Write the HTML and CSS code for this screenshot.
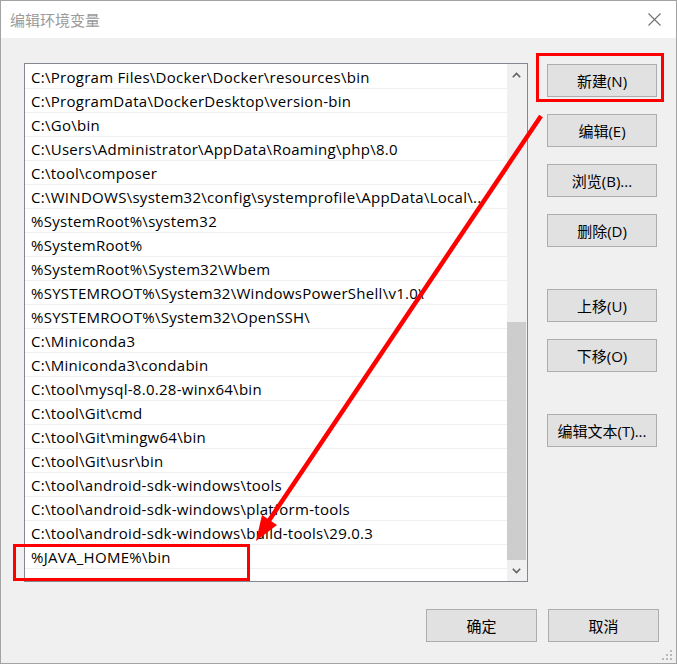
FILE: index.html
```html
<!DOCTYPE html>
<html lang="zh-CN">
<head>
<meta charset="utf-8">
<title>编辑环境变量</title>
<link rel="stylesheet" href="styles.css">
</head>
<body>
<div class="dialog">
  <div class="titlebar">
    <span class="title">编辑环境变量</span>
    <svg class="close" width="13" height="13" viewBox="0 0 13 13"><path d="M0.5 0.5 L12.5 12.5 M12.5 0.5 L0.5 12.5" stroke="#707070" stroke-width="1.1" fill="none"/></svg>
  </div>
  <div class="body">
    <div class="main">
      <div class="listbox">
        <ul class="rows">
          <li class="row">C:\Program Files\Docker\Docker\resources\bin</li>
          <li class="row">C:\ProgramData\DockerDesktop\version-bin</li>
          <li class="row">C:\Go\bin</li>
          <li class="row">C:\Users\Administrator\AppData\Roaming\php\8.0</li>
          <li class="row">C:\tool\composer</li>
          <li class="row">C:\WINDOWS\system32\config\systemprofile\AppData\Local\...</li>
          <li class="row">%SystemRoot%\system32</li>
          <li class="row">%SystemRoot%</li>
          <li class="row">%SystemRoot%\System32\Wbem</li>
          <li class="row">%SYSTEMROOT%\System32\WindowsPowerShell\v1.0\</li>
          <li class="row">%SYSTEMROOT%\System32\OpenSSH\</li>
          <li class="row">C:\Miniconda3</li>
          <li class="row">C:\Miniconda3\condabin</li>
          <li class="row">C:\tool\mysql-8.0.28-winx64\bin</li>
          <li class="row">C:\tool\Git\cmd</li>
          <li class="row">C:\tool\Git\mingw64\bin</li>
          <li class="row">C:\tool\Git\usr\bin</li>
          <li class="row">C:\tool\android-sdk-windows\tools</li>
          <li class="row">C:\tool\android-sdk-windows\platform-tools</li>
          <li class="row">C:\tool\android-sdk-windows\build-tools\29.0.3</li>
          <li class="row">%JAVA_HOME%\bin</li>
        </ul>
        <div class="scrollbar">
          <div class="sb-btn"><svg width="9" height="6" viewBox="0 0 9 6"><path d="M0.8 5.2 L4.5 1.5 L8.2 5.2" stroke="#606060" stroke-width="1.6" fill="none"/></svg></div>
          <div class="track"><div class="thumb"></div></div>
          <div class="sb-btn"><svg width="9" height="6" viewBox="0 0 9 6"><path d="M0.8 0.8 L4.5 4.5 L8.2 0.8" stroke="#606060" stroke-width="1.6" fill="none"/></svg></div>
        </div>
      </div>
      <div class="side">
        <div class="group">
          <button class="btn">新建(N)</button>
          <button class="btn">编辑(E)</button>
          <button class="btn">浏览(B)...</button>
          <button class="btn">删除(D)</button>
        </div>
        <div class="group">
          <button class="btn">上移(U)</button>
          <button class="btn">下移(O)</button>
        </div>
        <div class="group">
          <button class="btn">编辑文本(T)...</button>
        </div>
      </div>
    </div>
    <div class="footer">
      <button class="btn wide">确定</button>
      <button class="btn wide">取消</button>
    </div>
  </div>

  <div class="mark mark-new"></div>
  <div class="mark mark-java"></div>
  <svg class="arrow" width="677" height="664" viewBox="0 0 677 664">
    <line x1="541" y1="116" x2="268" y2="522" stroke="#ff0000" stroke-width="4.5"/>
    <polygon points="256,541 277,525 262,515" fill="#ff0000"/>
  </svg>
  <svg class="grip" width="12" height="12" viewBox="0 0 12 12">
    <rect x="9" y="1" width="2" height="2" fill="#b9b9b9"/>
    <rect x="5" y="5" width="2" height="2" fill="#b9b9b9"/>
    <rect x="9" y="5" width="2" height="2" fill="#b9b9b9"/>
    <rect x="1" y="9" width="2" height="2" fill="#b9b9b9"/>
    <rect x="5" y="9" width="2" height="2" fill="#b9b9b9"/>
    <rect x="9" y="9" width="2" height="2" fill="#b9b9b9"/>
  </svg>
</div>
</body>
</html>
```

FILE: styles.css
```css
html, body {
  margin: 0;
  padding: 0;
  background: #ffffff;
}

.dialog {
  position: relative;
  width: 677px;
  height: 664px;
  box-sizing: border-box;
  border: 1px solid #a3a3a3;
  background: #f0f0f0;
  display: flex;
  flex-direction: column;
  font-family: "Open Sans", "Noto Sans CJK SC", sans-serif;
  color: #000;
  overflow: hidden;
}

.titlebar {
  height: 37px;
  flex: none;
  background: #ffffff;
  display: flex;
  align-items: center;
  justify-content: space-between;
  padding: 0 15px 0 9px;
}

.title {
  font-family: "Noto Sans CJK SC", sans-serif;
  font-size: 15px;
  color: #9a9a9a;
  line-height: 1;
  margin-top: -1px;
}

.close {
  display: block;
  margin-top: -1px;
}

.body {
  flex: 1;
  display: flex;
  flex-direction: column;
}

.main {
  display: flex;
  padding: 25px 0 0 23px;
  gap: 19px;
}

.listbox {
  width: 504px;
  height: 519px;
  box-sizing: border-box;
  border: 1px solid #828790;
  background: #ffffff;
  display: flex;
}

.rows {
  list-style: none;
  margin: 0;
  padding: 1px 0 0 0;
  flex: 1;
  min-width: 0;
}

.row {
  height: 24px;
  box-sizing: border-box;
  border-bottom: 1px solid #efefef;
  padding-left: 6px;
  font-size: 15px;
  letter-spacing: 0.28px;
  line-height: 24px;
  white-space: nowrap;
  overflow: hidden;
}

.scrollbar {
  width: 20px;
  flex: none;
  background: #f0f0f0;
  display: flex;
  flex-direction: column;
}

.sb-btn {
  height: 21px;
  flex: none;
  display: flex;
  align-items: center;
  justify-content: center;
  padding-right: 1px;
}

.sb-btn svg {
  display: block;
}

.track {
  flex: 1;
  display: flex;
  flex-direction: column;
  justify-content: flex-end;
}

.thumb {
  height: 238px;
  margin-right: 1px;
  background: #cdcdcd;
}

.side {
  display: flex;
  flex-direction: column;
  gap: 42px;
  padding-top: 1px;
}

.group {
  display: flex;
  flex-direction: column;
  gap: 17px;
}

.btn {
  width: 110px;
  height: 33px;
  box-sizing: border-box;
  border: 1px solid #adadad;
  background: #e1e1e1;
  font-family: "Open Sans", "Noto Sans CJK SC", sans-serif;
  font-size: 15px;
  color: #000;
  padding: 0;
  margin: 0;
  display: flex;
  align-items: center;
  justify-content: center;
}

.btn.wide {
  width: 111px;
}

.footer {
  display: flex;
  justify-content: flex-end;
  gap: 11px;
  padding: 27px 17px 0 0;
}

.mark {
  position: absolute;
  border: 3px solid #ff0000;
  box-sizing: border-box;
}

.mark-new {
  left: 535px;
  top: 52px;
  width: 128px;
  height: 49px;
}

.mark-java {
  left: 12px;
  top: 543px;
  width: 237px;
  height: 37px;
}

.arrow {
  position: absolute;
  left: -1px;
  top: -1px;
  pointer-events: none;
}

.grip {
  position: absolute;
  right: 3px;
  bottom: 2px;
}
```
